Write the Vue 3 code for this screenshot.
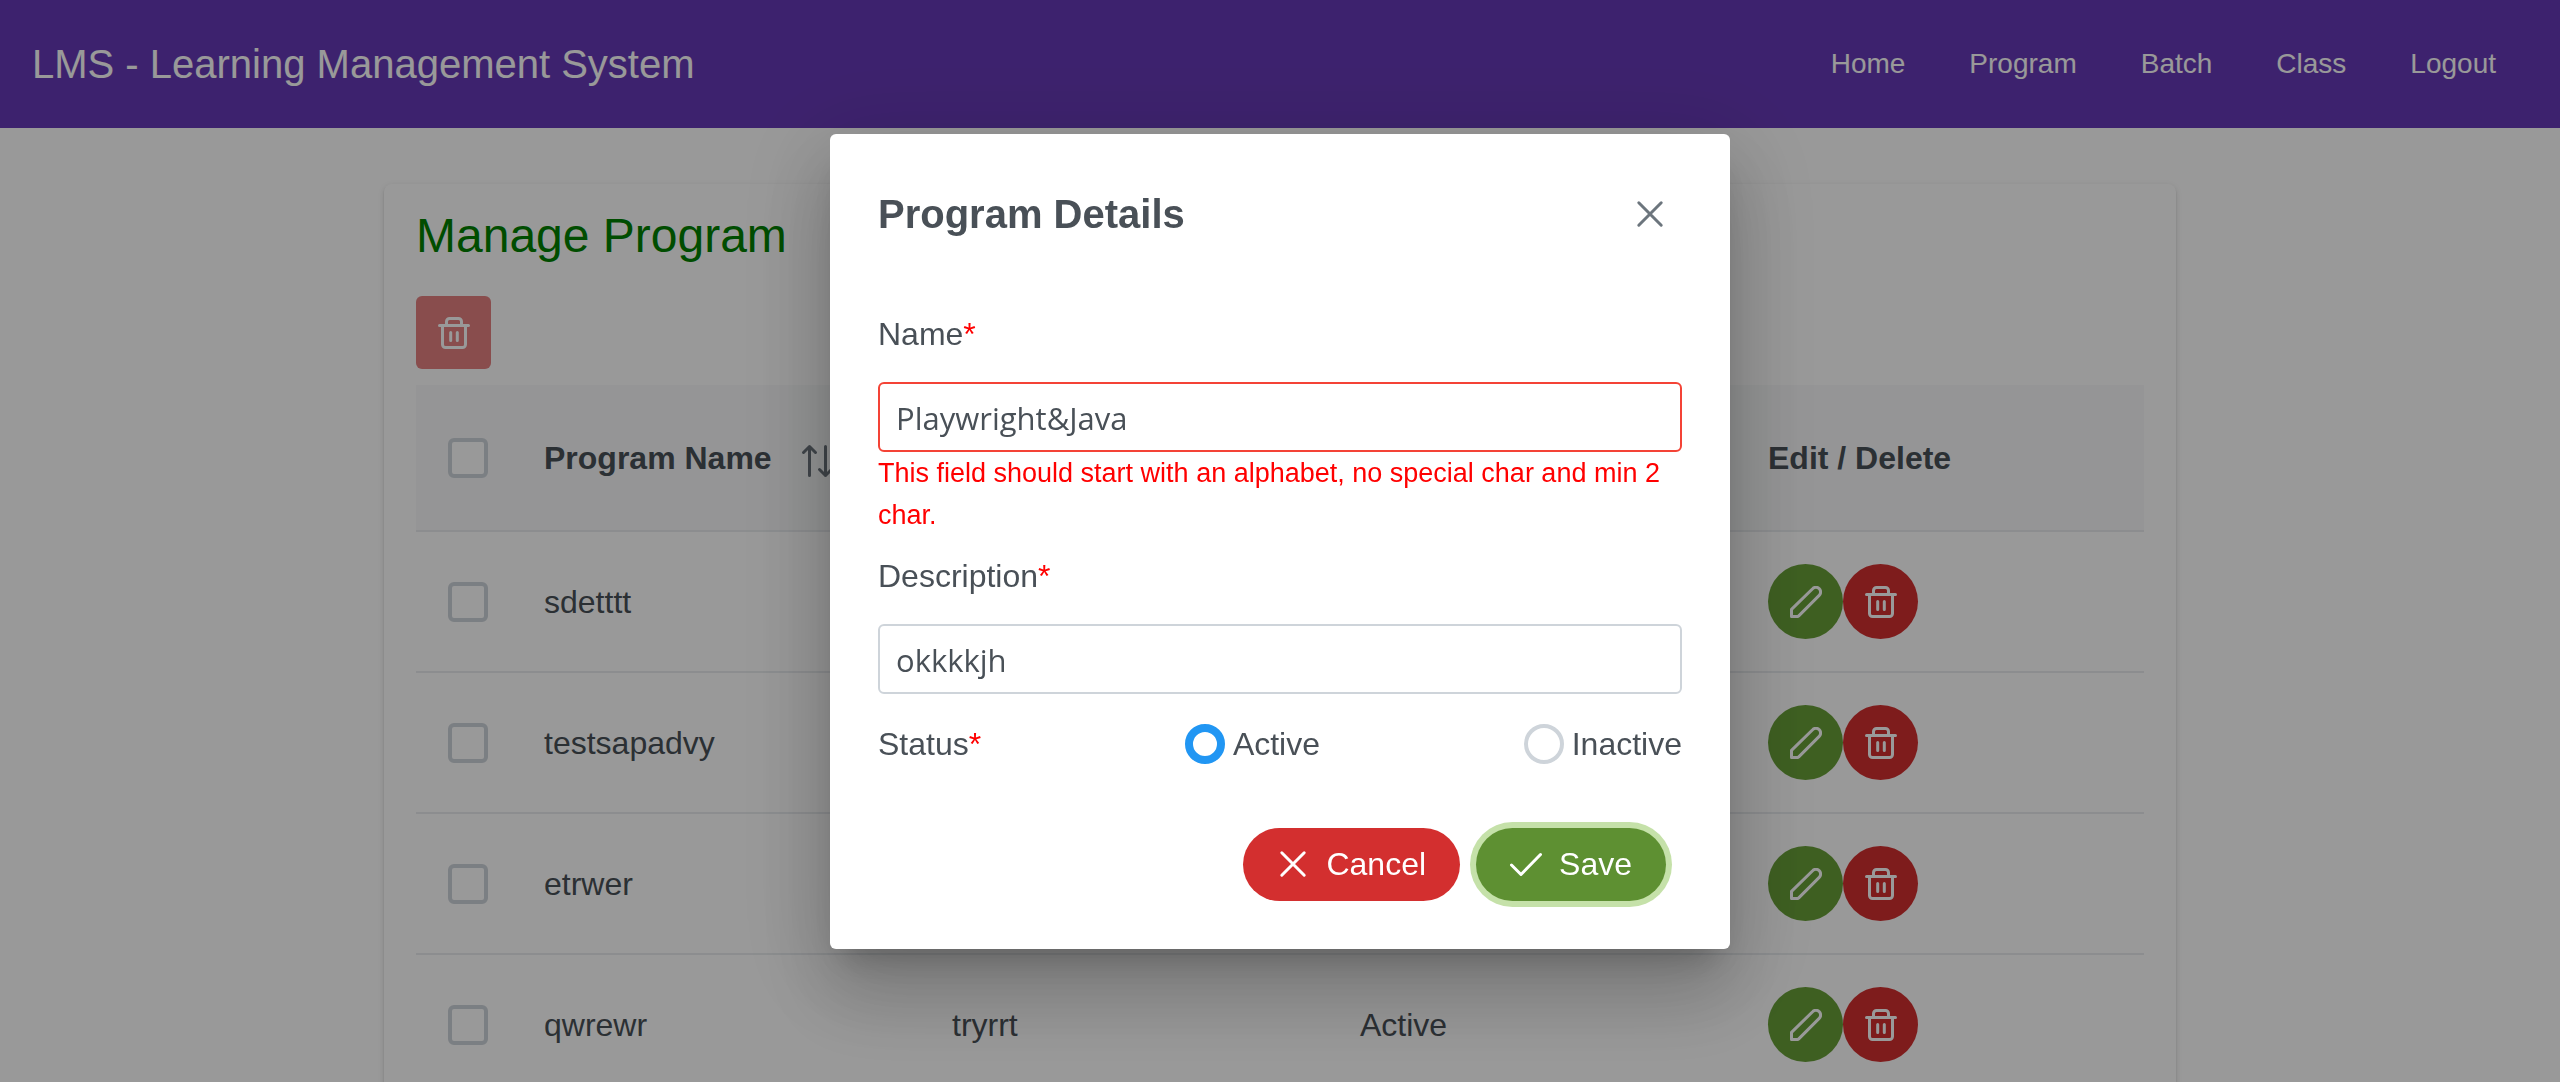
<script setup>
import { ref } from 'vue'

const links = ['Home', 'Program', 'Batch', 'Class', 'Logout']
const programs = ref([
  { name: 'sdetttt', description: '', status: '' },
  { name: 'testsapadvy', description: '', status: '' },
  { name: 'etrwer', description: '', status: '' },
  { name: 'qwrewr', description: 'tryrrt', status: 'Active' },
])
const name = ref('Playwright&Java')
const description = ref('okkkkjh')
const status = ref('Active')
</script>

<template>
  <div class="page">
    <header class="toolbar">
      <span class="brand">LMS - Learning Management System</span>
      <nav class="nav">
        <a v-for="link in links" :key="link" href="#" class="nav-link">{{ link }}</a>
      </nav>
    </header>

    <main class="card">
      <h1 class="heading">Manage Program</h1>
      <button class="bulk-delete" type="button" disabled aria-label="Delete selected">
        <svg class="icon" viewBox="0 0 32 32"><use href="#trash" /></svg>
      </button>

      <table class="grid">
        <thead>
          <tr>
            <th class="check-col"><input type="checkbox" class="check" aria-label="Select all" /></th>
            <th>
              <span class="sort-head">
                Program Name
                <svg class="sort" viewBox="0 0 44 44">
                  <path d="M13.500 39.500V10.500M7.500 16.500l6-6 6 6M29.500 10.500v29M23.500 33.500l6 6 6-6" />
                </svg>
              </span>
            </th>
            <th aria-label="Description"></th>
            <th aria-label="Status"></th>
            <th>Edit / Delete</th>
          </tr>
        </thead>
        <tbody>
          <tr v-for="program in programs" :key="program.name">
            <td><input type="checkbox" class="check" :aria-label="'Select ' + program.name" /></td>
            <td>{{ program.name }}</td>
            <td>{{ program.description }}</td>
            <td>{{ program.status }}</td>
            <td>
              <div class="actions">
                <button type="button" class="round edit" aria-label="Edit">
                  <svg class="icon" viewBox="0 0 32 32">
                    <path d="M1.5 30.4V23.4L22.6 2.7a4.6 4.6 0 0 1 6.6 0a4.6 4.6 0 0 1 0 6.6L9 29.6Q8.2 30.4 7.4 30.4Z" />
                  </svg>
                </button>
                <button type="button" class="round remove" aria-label="Delete">
                  <svg class="icon" viewBox="0 0 32 32"><use href="#trash" /></svg>
                </button>
              </div>
            </td>
          </tr>
        </tbody>
      </table>
    </main>

    <div class="mask">
      <form class="dialog" role="dialog" aria-labelledby="dialog-title" @submit.prevent>
        <div class="dialog-head">
          <h2 id="dialog-title" class="dialog-title">Program Details</h2>
          <button type="button" class="close" aria-label="Close">
            <svg class="icon" viewBox="0 0 32 32"><path d="M4.800 4.800l22.400 22.400M27.200 4.800L4.800 27.200" /></svg>
          </button>
        </div>

        <div class="dialog-body">
          <div class="field">
            <label for="name">Name<span class="red">*</span></label>
            <input id="name" v-model="name" type="text" class="text invalid" />
            <small class="error">This field should start with an alphabet, no special char and min 2 char.</small>
          </div>
          <div class="field">
            <label for="description">Description<span class="red">*</span></label>
            <input id="description" v-model="description" type="text" class="text" />
          </div>
          <div class="status">
            <span>Status<span class="red">*</span></span>
            <label v-for="option in ['Active', 'Inactive']" :key="option" class="option">
              <input v-model="status" type="radio" name="status" class="radio" :value="option" />
              {{ option }}
            </label>
          </div>
        </div>

        <div class="dialog-foot">
          <button type="button" class="pill cancel">
            <svg class="icon" viewBox="0 0 32 32"><path d="M4.800 4.800l22.400 22.400M27.200 4.800L4.800 27.200" /></svg>
            Cancel
          </button>
          <button type="submit" class="pill save">
            <svg class="icon" viewBox="0 0 32 32"><path d="M1.500 17l9.500 9.500L30.500 6.500" /></svg>
            Save
          </button>
        </div>
      </form>
    </div>

    <svg class="defs" aria-hidden="true">
      <symbol id="trash" viewBox="0 0 32 32">
        <path d="M1.500 8.500h29M8.500 8V4.500a3 3 0 0 1 3-3h9a3 3 0 0 1 3 3V8M4.500 9v18.500a3 3 0 0 0 3 3h17a3 3 0 0 0 3-3V9M12.700 15.500v8M19.300 15.500v8" />
      </symbol>
    </svg>
  </div>
</template>

<style>
body {
  margin: 0;
  overflow: hidden;
}
</style>

<style scoped>
.page {
  height: 100vh;
  overflow: hidden;
  background: #fff;
  color: #495057;
  font-family: "Liberation Sans", Arial, sans-serif;
  font-size: 32px;
  line-height: 48px;
}

button,
input {
  box-sizing: border-box;
  margin: 0;
  padding: 0;
  border: 0;
  font: inherit;
}

.icon,
.sort {
  flex: none;
  width: 32px;
  height: 32px;
  fill: none;
  stroke: currentColor;
  stroke-width: 3;
  stroke-linecap: round;
  stroke-linejoin: round;
}

.defs {
  display: none;
}

.toolbar {
  display: flex;
  align-items: center;
  justify-content: space-between;
  height: 128px;
  padding: 0 32px;
  background: #673ab7;
  color: #fff;
}

.brand {
  font-size: 40px;
}

.nav {
  display: flex;
}

.nav-link {
  padding: 0 32px;
  color: #fff;
  font-size: 28px;
  text-decoration: none;
}

.card {
  box-sizing: border-box;
  width: 70%;
  margin: 56px auto 0;
  padding: 20px 32px 32px;
  border-radius: 8px;
  background: #fff;
  box-shadow:
    0 4px 2px -2px rgba(0, 0, 0, 0.2),
    0 2px 2px 0 rgba(0, 0, 0, 0.14),
    0 2px 6px 0 rgba(0, 0, 0, 0.12);
}

.heading {
  margin: 0;
  color: #008000;
  font-size: 48px;
  font-weight: 400;
  line-height: 64px;
}

.bulk-delete {
  display: flex;
  align-items: center;
  justify-content: center;
  width: 75px;
  height: 73px;
  margin: 28px 0 16px;
  border-radius: 6px;
  background: #d32f2f;
  color: #fff;
  opacity: 0.6;
}

.grid {
  width: 100%;
  border-collapse: separate;
  border-spacing: 0;
  table-layout: fixed;
}

.grid th,
.grid td {
  box-sizing: border-box;
  height: 141px;
  padding: 0 32px;
  border-bottom: 2px solid #e9ecef;
  text-align: left;
}

.grid th {
  height: 147px;
  background: #f8f9fa;
}

.grid .check-col {
  width: 96px;
}

.sort-head {
  display: flex;
  align-items: center;
  white-space: nowrap;
}

.sort {
  width: 44px;
  height: 44px;
  margin-left: 24px;
  color: #6c757d;
}

.check {
  display: block;
  width: 40px;
  height: 40px;
  border: 4px solid #ced4da;
  border-radius: 6px;
  background: #fff;
  appearance: none;
}

.actions {
  display: flex;
}

.round {
  display: flex;
  align-items: center;
  justify-content: center;
  width: 75px;
  height: 75px;
  border-radius: 50%;
  color: #fff;
}

.edit {
  background: #689f38;
}

.remove {
  background: #d32f2f;
}

.mask {
  position: fixed;
  inset: 0;
  display: flex;
  align-items: center;
  justify-content: center;
  background: rgba(0, 0, 0, 0.4);
}

.dialog {
  width: 900px;
  max-width: 94vw;
  border-radius: 6px;
  background: #fff;
  box-shadow:
    0 22px 30px -14px rgba(0, 0, 0, 0.2),
    0 48px 76px 6px rgba(0, 0, 0, 0.14),
    0 18px 92px 16px rgba(0, 0, 0, 0.12);
}

.dialog-head {
  display: flex;
  align-items: center;
  justify-content: space-between;
  padding: 48px;
}

.dialog-title {
  margin: 0;
  font-size: 40px;
  font-weight: 700;
}

.close {
  display: flex;
  align-items: center;
  justify-content: center;
  width: 64px;
  height: 64px;
  background: transparent;
  color: #6c757d;
}

.dialog-body {
  display: flex;
  flex-direction: column;
  gap: 16px;
  padding: 16px 48px 60px;
}

.field {
  display: flex;
  flex-direction: column;
}

.red {
  color: #f00;
}

.text {
  width: 100%;
  height: 70px;
  margin-top: 24px;
  padding: 2px 16px 0;
  border: 2px solid #ced4da;
  border-radius: 6px;
  background: #fff;
  color: #495057;
  font-family: "Open Sans", "Noto Sans", sans-serif;
  font-size: 31px;
}

.invalid {
  border-color: #f44336;
}

.error {
  color: #f00;
  font-size: 27px;
  line-height: 42px;
}

.status {
  display: flex;
  align-items: center;
  justify-content: space-between;
  padding-top: 10px;
}

.option {
  display: flex;
  align-items: center;
  gap: 8px;
}

.radio {
  width: 40px;
  height: 40px;
  border: 4px solid #ced4da;
  border-radius: 50%;
  background: #fff;
  appearance: none;
}

.radio:checked {
  border: 8px solid #2196f3;
}

.dialog-foot {
  display: flex;
  justify-content: flex-end;
  gap: 16px;
  padding: 0 64px 48px 48px;
}

.pill {
  display: flex;
  align-items: center;
  gap: 17px;
  height: 73px;
  padding: 0 34px;
  border-radius: 37px;
  color: #fff;
}

.cancel {
  background: #d32f2f;
}

.save {
  background: #5e9032;
  box-shadow: 0 0 0 6px #c5e1a9;
}
</style>
